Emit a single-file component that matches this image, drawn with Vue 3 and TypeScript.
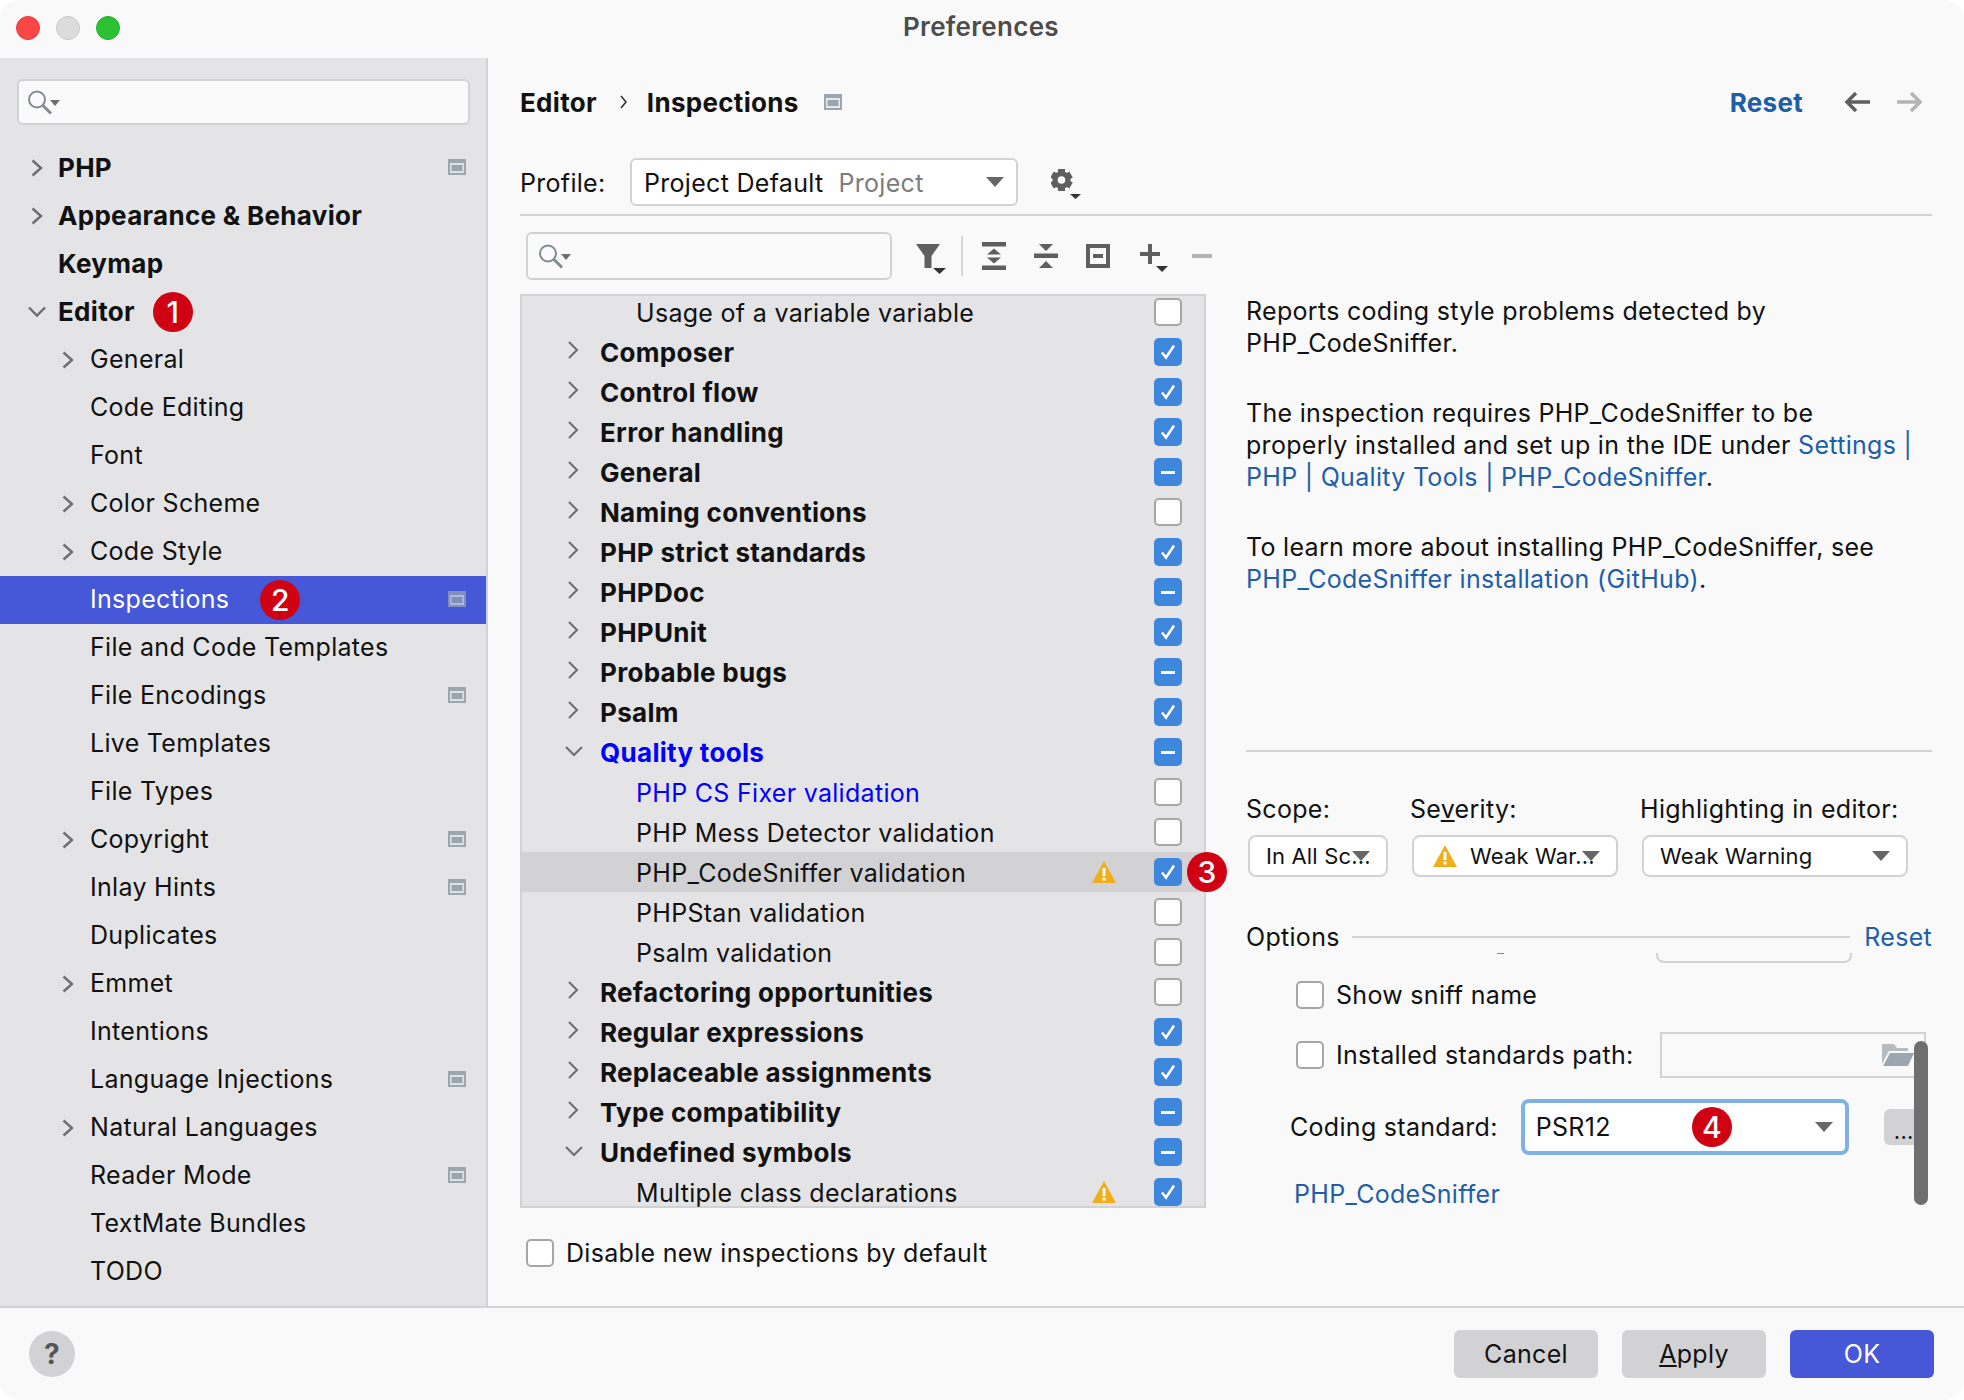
<script setup lang="ts">
type Check = 'on' | 'off' | 'mixed'
type Row = {
  label: string
  check: Check
  depth: 0 | 1
  open?: boolean
  blue?: boolean
  warn?: boolean
  selected?: boolean
  badge?: string
}

const nav = [
  { label: 'PHP', bold: true, arrow: 'right', scope: true },
  { label: 'Appearance & Behavior', bold: true, arrow: 'right' },
  { label: 'Keymap', bold: true },
  { label: 'Editor', bold: true, arrow: 'down', badge: '1' },
  { label: 'General', arrow: 'right' },
  { label: 'Code Editing' },
  { label: 'Font' },
  { label: 'Color Scheme', arrow: 'right' },
  { label: 'Code Style', arrow: 'right' },
  { label: 'Inspections', selected: true, scope: true, badge: '2' },
  { label: 'File and Code Templates' },
  { label: 'File Encodings', scope: true },
  { label: 'Live Templates' },
  { label: 'File Types' },
  { label: 'Copyright', arrow: 'right', scope: true },
  { label: 'Inlay Hints', scope: true },
  { label: 'Duplicates' },
  { label: 'Emmet', arrow: 'right' },
  { label: 'Intentions' },
  { label: 'Language Injections', scope: true },
  { label: 'Natural Languages', arrow: 'right' },
  { label: 'Reader Mode', scope: true },
  { label: 'TextMate Bundles' },
  { label: 'TODO' },
]

const rows: Row[] = [
  { label: 'Usage of a variable variable', check: 'off', depth: 1 },
  { label: 'Composer', check: 'on', depth: 0 },
  { label: 'Control flow', check: 'on', depth: 0 },
  { label: 'Error handling', check: 'on', depth: 0 },
  { label: 'General', check: 'mixed', depth: 0 },
  { label: 'Naming conventions', check: 'off', depth: 0 },
  { label: 'PHP strict standards', check: 'on', depth: 0 },
  { label: 'PHPDoc', check: 'mixed', depth: 0 },
  { label: 'PHPUnit', check: 'on', depth: 0 },
  { label: 'Probable bugs', check: 'mixed', depth: 0 },
  { label: 'Psalm', check: 'on', depth: 0 },
  { label: 'Quality tools', check: 'mixed', depth: 0, open: true, blue: true },
  { label: 'PHP CS Fixer validation', check: 'off', depth: 1, blue: true },
  { label: 'PHP Mess Detector validation', check: 'off', depth: 1 },
  { label: 'PHP_CodeSniffer validation', check: 'on', depth: 1, warn: true, selected: true, badge: '3' },
  { label: 'PHPStan validation', check: 'off', depth: 1 },
  { label: 'Psalm validation', check: 'off', depth: 1 },
  { label: 'Refactoring opportunities', check: 'off', depth: 0 },
  { label: 'Regular expressions', check: 'on', depth: 0 },
  { label: 'Replaceable assignments', check: 'on', depth: 0 },
  { label: 'Type compatibility', check: 'mixed', depth: 0 },
  { label: 'Undefined symbols', check: 'mixed', depth: 0, open: true },
  { label: 'Multiple class declarations', check: 'on', depth: 1, warn: true },
]
</script>

<template>
  <div class="window">
    <header class="titlebar">
      <div class="lights">
        <span class="light red"></span>
        <span class="light grey"></span>
        <span class="light green"></span>
      </div>
      <div class="title">Preferences</div>
    </header>

    <div class="body">
      <aside class="sidebar">
        <div class="search side-search">
          <svg class="search-icon" width="32" height="28" viewBox="0 0 32 28">
            <circle cx="9" cy="11.500" r="8" fill="none" stroke="#7f8b91" stroke-width="2" />
            <path d="M15 17.500l8 8" stroke="#7f8b91" stroke-width="3" />
            <path d="M22 12h10l-5 6z" fill="#6e6e6e" />
          </svg>
        </div>
        <ul class="nav">
          <li v-for="n in nav" :key="n.label" class="nav-row" :class="{ selected: n.selected, top: n.bold }">
            <span v-if="n.arrow" class="nav-arrow" :class="n.arrow">
              <svg v-if="n.arrow === 'right'" width="12" height="18" viewBox="0 0 12 18"><path d="M1.500 1.500l8.500 7.500-8.500 7.500" fill="none" stroke="#6e6e6e" stroke-width="2.400" /></svg>
              <svg v-else width="18" height="12" viewBox="0 0 18 12"><path d="M1 1.500l8 8 8-8" fill="none" stroke="#6e6e6e" stroke-width="2.400" /></svg>
            </span>
            <span class="nav-label">{{ n.label }}</span>
            <span v-if="n.badge" class="badge nav-badge">{{ n.badge }}</span>
            <svg v-if="n.scope" class="scope" width="18" height="16" viewBox="0 0 18 16">
              <rect width="18" height="16" fill="#9aa7b0" />
              <rect x="2" y="4" width="14" height="10" fill="#dfe2e5" />
              <rect x="3.500" y="6" width="11" height="6" fill="#9aa7b0" />
            </svg>
          </li>
        </ul>
      </aside>

      <main class="main">
        <div class="crumbs">
          <span class="crumb">Editor</span>
          <svg class="crumb-sep" width="8" height="14" viewBox="0 0 8 14"><path d="M1 1l5 6-5 6" fill="none" stroke="#333" stroke-width="1.600" /></svg>
          <span class="crumb">Inspections</span>
          <svg class="crumb-scope" width="18" height="16" viewBox="0 0 18 16">
            <rect width="18" height="16" fill="#9aa7b0" />
            <rect x="2" y="4" width="14" height="10" fill="#e6e9eb" />
            <rect x="3.500" y="6" width="11" height="6" fill="#9aa7b0" />
          </svg>
          <span class="crumb-reset">Reset</span>
          <svg class="nav-arrow-icon" width="28" height="24" viewBox="0 0 28 24"><path d="M27 12H4M13 3l-9 9 9 9" fill="none" stroke="#5f5f5f" stroke-width="3.500" /></svg>
          <svg class="nav-arrow-icon fwd" width="28" height="24" viewBox="0 0 28 24"><path d="M1 12h23M15 3l9 9-9 9" fill="none" stroke="#b4b4b4" stroke-width="3.500" /></svg>
        </div>

        <div class="profile">
          <span class="profile-label">Profile:</span>
          <div class="combo profile-combo">
            <span>Project Default</span>
            <span class="muted">Project</span>
            <span class="caret"></span>
          </div>
          <svg class="gear" width="30" height="30" viewBox="0 0 30 30">
            <g fill="#5f5f5f">
              <rect x="7" y="0" width="7" height="22" />
              <rect x="7" y="0" width="7" height="22" transform="rotate(60 10.500 11)" />
              <rect x="7" y="0" width="7" height="22" transform="rotate(120 10.500 11)" />
            </g>
            <circle cx="10.500" cy="11" r="6.500" fill="none" stroke="#5f5f5f" stroke-width="5" />
            <circle cx="10.500" cy="11" r="3.800" fill="#f9f9f9" />
            <path fill="#333" d="M19 25h11l-5.500 5z" />
          </svg>
        </div>
        <div class="rule"></div>

        <div class="columns">
          <section class="left">
            <div class="toolbar">
              <div class="search tool-search">
                <svg class="search-icon" width="32" height="28" viewBox="0 0 32 28">
                  <circle cx="9" cy="11.500" r="8" fill="none" stroke="#7f8b91" stroke-width="2" />
                  <path d="M15 17.500l8 8" stroke="#7f8b91" stroke-width="3" />
                  <path d="M22 12h10l-5 6z" fill="#6e6e6e" />
                </svg>
              </div>
              <svg class="tool filter" width="30" height="30" viewBox="0 0 30 30">
                <path fill="#5f5f5f" d="M0 0h24L15.500 12v12h-7V12z" />
                <path fill="#333" d="M17 24h13l-6.500 6z" />
              </svg>
              <span class="tool-sep"></span>
              <svg class="tool" width="24" height="28" viewBox="0 0 24 28">
                <path fill="#5f5f5f" d="M0 0h24v4.500H0zM0 23.500h24V28H0zM5 12.500h14L12 6.500zM5 15.500h14l-7 6z" />
              </svg>
              <svg class="tool tool-gap" width="24" height="24" viewBox="0 0 24 24">
                <path fill="#5f5f5f" d="M0 9.500h24v4.500H0zM5 0h14l-7 7zM5 24h14l-7-7z" />
              </svg>
              <svg class="tool tool-gap" width="24" height="24" viewBox="0 0 24 24">
                <path fill="none" stroke="#5f5f5f" stroke-width="4" d="M2 2h20v20H2z" />
                <path fill="#5f5f5f" d="M7 10h10v4H7z" />
              </svg>
              <svg class="tool add" width="28" height="28" viewBox="0 0 28 28">
                <path fill="#5f5f5f" d="M8 0h4v8h8v4h-8v8H8v-8H0V8h8z" />
                <path fill="#333" d="M16 22h12l-6 6z" />
              </svg>
              <svg class="tool minus" width="20" height="4" viewBox="0 0 20 4"><path fill="#b4b4b4" d="M0 0h20v4H0z" /></svg>
            </div>

            <div class="tree">
              <div
                v-for="r in rows"
                :key="r.label"
                class="tree-row"
                :class="{ selected: r.selected, group: r.depth === 0, leaf: r.depth === 1, blue: r.blue }"
              >
                <span v-if="r.depth === 0" class="tree-arrow" :class="{ open: r.open }">
                  <svg v-if="r.open" width="18" height="12" viewBox="0 0 18 12"><path d="M1 2l8 8 8-8" fill="none" stroke="#6e6e6e" stroke-width="2" /></svg>
                  <svg v-else width="12" height="18" viewBox="0 0 12 18"><path d="M2 1l8 8-8 8" fill="none" stroke="#6e6e6e" stroke-width="2" /></svg>
                </span>
                <span class="tree-label">{{ r.label }}</span>
                <svg v-if="r.warn" class="warn" width="24" height="22" viewBox="0 0 24 22">
                  <path fill="#f2ad1b" d="M12 0l12 22H0z" />
                  <path fill="#fff" d="M10.500 7h3v8h-3zM10.500 16.500h3v3h-3z" />
                </svg>
                <span class="check" :class="r.check">
                  <svg v-if="r.check === 'on'" width="18" height="18" viewBox="0 0 18 18"><path d="M3 9.500l4 5 8-12" fill="none" stroke="#fff" stroke-width="2.600" /></svg>
                  <span v-else-if="r.check === 'mixed'" class="dash"></span>
                </span>
                <span v-if="r.badge" class="badge tree-badge">{{ r.badge }}</span>
              </div>
            </div>

            <label class="disable">
              <span class="check off"></span>
              <span>Disable new inspections by default</span>
            </label>
          </section>

          <section class="right">
            <div class="desc">
              <p>Reports coding style problems detected by<br />PHP_CodeSniffer.</p>
              <p>The inspection requires PHP_CodeSniffer to be<br />properly installed and set up in the IDE under <a>Settings |</a><br /><a>PHP | Quality Tools | PHP_CodeSniffer</a>.</p>
              <p>To learn more about installing PHP_CodeSniffer, see<br /><a>PHP_CodeSniffer installation (GitHub)</a>.</p>
            </div>
            <div class="rule"></div>

            <div class="fields">
              <div class="field scope-field">
                <span>Scope:</span>
                <div class="combo small"><span class="clip">In All Sc...</span><span class="caret"></span></div>
              </div>
              <div class="field severity-field">
                <span>Se<u>v</u>erity:</span>
                <div class="combo small">
                  <svg width="24" height="22" viewBox="0 0 24 22">
                    <path fill="#f2ad1b" d="M12 0l12 22H0z" />
                    <path fill="#fff" d="M10.500 7h3v8h-3zM10.500 16.500h3v3h-3z" />
                  </svg>
                  <span class="clip">Weak War...</span><span class="caret"></span>
                </div>
              </div>
              <div class="field highlight-field">
                <span>Highlighting in editor:</span>
                <div class="combo small"><span class="clip">Weak Warning</span><span class="caret"></span></div>
              </div>
            </div>

            <div class="options-head">
              <span>Options</span>
              <span class="options-line"></span>
              <a>Reset</a>
            </div>

            <div class="options">
              <div class="clipped">
                <span class="clipped-dash"></span>
                <span class="clipped-box"></span>
              </div>
              <label class="opt-row sniff">
                <span class="check off"></span>
                <span>Show sniff name</span>
              </label>
              <div class="opt-row path">
                <span class="check off"></span>
                <span>Installed standards path:</span>
                <div class="path-input">
                  <svg width="32" height="22" viewBox="0 0 32 22">
                    <path fill="#b6bdc2" d="M0 0h12l3 4h11v3H7L0 20z" />
                    <path fill="#9aa7b0" d="M8 9h24l-6 13H1z" />
                  </svg>
                </div>
              </div>
              <div class="opt-row standard">
                <span>Coding standard:</span>
                <div class="combo focus">
                  <span>PSR12</span>
                  <span class="badge focus-badge">4</span>
                  <span class="caret"></span>
                </div>
                <span class="more">...</span>
              </div>
              <a class="opt-link">PHP_CodeSniffer</a>
              <span class="scrollbar"></span>
            </div>
          </section>
        </div>
      </main>
    </div>

    <footer class="footer">
      <span class="help">?</span>
      <div class="buttons">
        <button class="btn">Cancel</button>
        <button class="btn"><u>A</u>pply</button>
        <button class="btn primary">OK</button>
      </div>
    </footer>
  </div>
</template>

<style>
html, body { background: #fff; }
</style>

<style scoped>
* { box-sizing: border-box; }
p { margin: 0; }
ul { list-style: none; margin: 0; padding: 0; }

.window {
  width: 1964px;
  height: 1400px;
  background: #f9f9f9;
  border-radius: 20px;
  overflow: hidden;
  display: flex;
  flex-direction: column;
  font-family: Inter, "Noto Sans", sans-serif;
  font-size: 25px;
  letter-spacing: 0.3px;
  color: #111;
}

.titlebar {
  height: 58px;
  flex: none;
  position: relative;
  display: flex;
  align-items: center;
  justify-content: center;
}
.lights {
  position: absolute;
  left: 16px;
  top: 16px;
  display: flex;
  gap: 16px;
}
.light { width: 24px; height: 24px; border-radius: 50%; }
.light.red { background: #fb4646; border: 1px solid #e63c3c; }
.light.grey { background: #dcdcdc; border: 1px solid #c8c8c8; }
.light.green { background: #2ac232; border: 1px solid #24ad2b; }
.title { font-size: 26px; font-weight: 600; color: #4c4c4c; margin: -5px 0 0 -2px; }

.body { flex: 1; display: flex; min-height: 0; border-bottom: 2px solid #d2d2d4; }

.sidebar {
  width: 488px;
  flex: none;
  background: #e4e4e6;
  border-right: 2px solid #d2d2d4;
  padding-top: 21px;
}
.search {
  background: #fafafa;
  border: 2px solid #d2d2d4;
  border-radius: 6px;
  display: flex;
  align-items: center;
  padding-left: 9px;
}
.side-search { width: 453px; height: 46px; margin-left: 17px; }
.search-icon { display: block; }

.nav { margin-top: 19px; }
.nav-row {
  height: 48px;
  display: flex;
  align-items: center;
  position: relative;
  padding-left: 90px;
}
.nav-label { margin-top: -2px; }
.nav-row.top { padding-left: 58px; font-weight: 700; font-size: 26px; }
.nav-row.selected { background: #4657d8; color: #fff; }
.nav-arrow { position: absolute; left: 62px; top: 15px; line-height: 0; }
.nav-row.top .nav-arrow { left: 31px; }
.nav-row.top .nav-arrow.down { left: 28px; top: 18px; }
.nav-badge { margin-left: 31px; }
.nav-row.top .nav-badge { margin-left: 18px; }
.scope { position: absolute; right: 20px; top: 15px; }
.selected .scope { opacity: 0.7; }

.badge {
  width: 40px;
  height: 40px;
  border-radius: 50%;
  background: #cf0113;
  color: #fff;
  display: inline-flex;
  align-items: center;
  justify-content: center;
  font-size: 30px;
  font-weight: 500;
  letter-spacing: 0;
  flex: none;
}

.main { flex: 1; padding: 0 32px; min-width: 0; }

.crumbs { display: flex; align-items: center; height: 40px; margin-top: 24px; }
.crumb { font-weight: 700; font-size: 26px; }
.crumb-sep { margin: 0 19px 0 23px; }
.crumb-scope { margin-left: 25px; }
.crumb-reset { margin-left: auto; color: #1f5ea8; font-weight: 700; font-size: 26px; margin-right: 40px; }
.nav-arrow-icon.fwd { margin-left: 25px; margin-right: 8px; }

.profile { display: flex; align-items: center; height: 48px; margin-top: 36px; }
.profile-label { width: 110px; padding-top: 2px; }
.combo {
  background: #fff;
  border: 2px solid #d2d2d4;
  border-radius: 6px;
  display: flex;
  align-items: center;
  position: relative;
}
.profile-combo { width: 388px; height: 48px; padding: 2px 0 0 12px; gap: 15px; }
.muted { color: #7c7c7c; }
.caret {
  position: absolute;
  right: 12px;
  top: 50%;
  margin-top: -5px;
  width: 0;
  height: 0;
  border-left: 9px solid transparent;
  border-right: 9px solid transparent;
  border-top: 10px solid #666;
}
.gear { margin-left: 33px; margin-top: 4px; flex: none; }

.rule { height: 2px; background: #d2d2d4; }
.profile + .rule { margin-top: 8px; }

.columns { display: flex; gap: 40px; }
.left, .right { width: 686px; flex: none; }

.toolbar { display: flex; align-items: center; height: 48px; margin-top: 16px; padding-left: 6px; }
.tool-search { width: 366px; height: 48px; flex: none; padding-left: 11px; }
.tool { display: block; flex: none; }
.filter { margin-left: 24px; margin-top: 6px; }
.tool-sep { width: 2px; height: 40px; background: #d6d6d6; margin: 0 19px 0 15px; flex: none; }
.tool-gap { margin-left: 28px; }
.add { margin-top: 4px; margin-left: 30px; }
.minus { margin-left: 24px; }

.tree {
  height: 914px;
  margin-top: 14px;
  background: #e4e4e6;
  border: 2px solid #d2d2d4;
  position: relative;
  clip-path: inset(0 -40px 0 0);
}
.tree-row {
  height: 40px;
  display: flex;
  align-items: center;
  position: relative;
}
.tree-row:first-child { margin-top: -4px; }
.tree-row.selected { background: #d2d2d4; }
.tree-row.group { font-weight: 700; font-size: 26px; padding-left: 78px; }
.tree-row.leaf { padding: 2px 0 0 114px; }
.tree-row.blue { color: #0000ff; }
.tree-arrow { position: absolute; left: 45px; top: 9px; line-height: 0; }
.tree-arrow.open { left: 43px; top: 13px; }
.warn { position: absolute; left: 570px; top: 9px; }
.check {
  width: 28px;
  height: 28px;
  border-radius: 5px;
  display: flex;
  align-items: center;
  justify-content: center;
  flex: none;
  font-size: 0;
}
.tree-row .check { position: absolute; left: 632px; top: 6px; }
.check.off { background: #fff; border: 2px solid #a6a6a6; }
.check.on, .check.mixed { background: #3f86dd; }
.dash { width: 14px; height: 3px; background: #fff; }
.tree-badge { position: absolute; left: 665px; top: 0; }

.disable { display: flex; align-items: center; gap: 12px; height: 28px; margin-top: 31px; padding-left: 6px; }

.desc { height: 534px; padding-top: 79px; line-height: 32px; display: flex; flex-direction: column; gap: 38px; }
a { color: #1f5ea8; }

.fields { display: flex; height: 84px; margin-top: 41px; }
.field { display: flex; flex-direction: column; line-height: 32px; }
.field .combo { margin-top: 10px; margin-left: 2px; height: 44px; border-radius: 8px; font-size: 22px; letter-spacing: 0.15px; padding-left: 16px; }
.scope-field { width: 164px; }
.scope-field .combo { width: 140px; }
.severity-field { width: 230px; }
.severity-field .combo { width: 206px; gap: 13px; padding-left: 19px; }
.highlight-field .combo { width: 266px; }
.clip { white-space: nowrap; overflow: hidden; }
.small .caret { right: 16px; }

.options-head { display: flex; align-items: center; height: 32px; margin-top: 44px; }
.options-line { flex: 1; height: 2px; background: #d2d2d4; margin: 0 14px 0 12px; }

.options { position: relative; height: 258px; }
.clipped { height: 9px; position: relative; }
.clipped-dash { position: absolute; left: 251px; top: 0; width: 7px; height: 1px; background: #888; }
.clipped-box {
  position: absolute;
  left: 410px;
  top: 0;
  width: 196px;
  height: 10px;
  border: 2px solid #d2d2d4;
  border-top: 0;
  border-radius: 0 0 8px 8px;
}
.opt-row { display: flex; align-items: center; }
.sniff { height: 28px; margin-top: 19px; margin-left: 50px; gap: 12px; }
.path { height: 28px; margin-top: 32px; margin-left: 50px; gap: 12px; }
.path-input {
  width: 266px;
  height: 46px;
  border: 2px solid #d2d2d4;
  margin-left: 15px;
  flex: none;
  display: flex;
  align-items: center;
  justify-content: flex-end;
  padding-right: 10px;
}
.standard { height: 56px; margin-top: 30px; margin-left: 44px; }
.standard .combo.focus {
  width: 328px;
  height: 56px;
  margin-left: 23px;
  border: 4px solid #7fb0e8;
  border-radius: 8px;
  padding-left: 11px;
  flex: none;
}
.focus-badge { position: absolute; left: 167px; top: 4px; }
.focus .caret { right: 12px; }
.more {
  width: 36px;
  height: 36px;
  background: #d2d2d4;
  border-radius: 6px;
  margin-left: 35px;
  display: flex;
  justify-content: center;
  align-items: flex-end;
  line-height: 28px;
  font-size: 22px;
  padding-left: 4px;
  flex: none;
}
.opt-link { display: block; margin-left: 48px; margin-top: 21px; line-height: 36px; }
.scrollbar {
  position: absolute;
  left: 668px;
  top: 88px;
  width: 14px;
  height: 164px;
  border-radius: 7px;
  background: #6f6f6f;
}

.footer { height: 92px; flex: none; display: flex; align-items: center; justify-content: space-between; padding: 0 30px 0 29px; }
.help {
  width: 46px;
  height: 46px;
  border-radius: 50%;
  background: #d2d2d4;
  color: #555;
  font-weight: 700;
  font-size: 28px;
  display: flex;
  align-items: center;
  justify-content: center;
}
.buttons { display: flex; gap: 24px; }
.btn {
  width: 144px;
  height: 48px;
  border: 0;
  border-radius: 6px;
  background: #d2d2d4;
  font: inherit;
  letter-spacing: inherit;
  color: #111;
  padding: 0;
}
.btn.primary { background: #4657d8; color: #fff; }
</style>
